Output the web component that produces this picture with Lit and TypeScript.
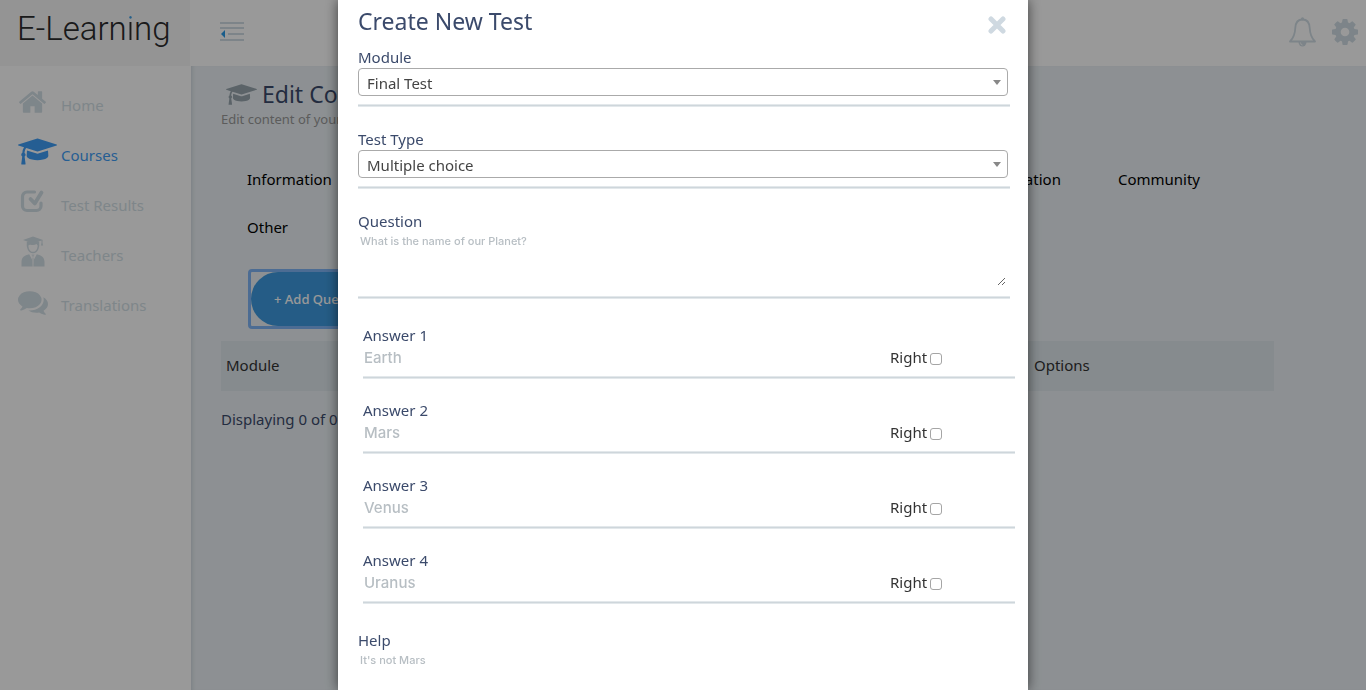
import { LitElement, html, svg, css } from "lit";
import { customElement, state } from "lit/decorators.js";

const CAP =
  "M1774 836l18 316q4 69-82 128t-235 93.5-323 34.5-323-34.5-235-93.5-82-128l18-316 574 181q22 7 48 7t48-7zm530-324q0 23-22 31l-1120 352q-4 1-10 1t-10-1l-652-206q-43 34-71 111.5t-34 178.5q63 36 63 109 0 69-58 107l58 433q2 14-8 25-9 11-24 11h-192q-15 0-24-11-10-11-8-25l58-433q-58-38-58-107 0-73 65-111 11-207 98-330l-333-104q-22-8-22-31t22-31l1120-352q4-1 10-1t10 1l1120 352q22 8 22 31z";
const HOME =
  "M1472 992v480q0 26-19 45t-45 19h-384v-384h-256v384h-384q-26 0-45-19t-19-45v-480q0-1 .5-3t.5-3l575-474 575 474q1 2 1 6zm223-69l-62 74q-8 9-21 11h-3q-13 0-21-7l-692-577-692 577q-12 8-24 7-13-2-21-11l-62-74q-8-10-7-23.5t11-21.5l719-599q32-26 76-26t76 26l244 204v-195q0-14 9-23t23-9h192q14 0 23 9t9 23v408l219 182q10 8 11 21.5t-7 23.5z";
const COG =
  "M1152 896q0-106-75-181t-181-75-181 75-75 181 75 181 181 75 181-75 75-181zm512-109v222q0 12-8 23t-20 13l-185 28q-19 54-39 91 35 50 107 138 10 12 10 25t-9 23q-27 37-99 108t-94 71q-12 0-26-9l-138-108q-44 23-91 38-16 136-29 186-7 28-36 28h-222q-14 0-24.5-8.5t-11.5-21.5l-28-184q-49-16-90-37l-141 107q-10 9-25 9-14 0-25-11-126-114-165-168-7-10-7-23 0-12 8-23 15-21 51-66.5t54-70.5q-27-50-41-99l-183-27q-13-2-21-12.5t-8-23.5v-222q0-12 8-23t19-13l186-28q14-46 39-92-40-57-107-138-10-12-10-24 0-10 9-23 26-36 98.5-107.5t94.5-71.5q13 0 26 10l138 107q44-23 91-38 16-136 29-186 7-28 36-28h222q14 0 24.5 8.5t11.5 21.5l28 184q49 16 90 37l142-107q9-9 24-9 13 0 25 10 129 119 165 170 7 8 7 22 0 12-8 23-15 21-51 66.5t-54 70.5q26 50 41 98l183 28q13 2 21 12.5t8 23.5z";
const CHAT =
  "M1408 768q0 139-94 257t-256.5 186.5-353.5 68.5q-86 0-176-16-124 88-278 128-36 9-86 16h-3q-11 0-20.5-8t-11.5-21q-1-3-1-6.5t.5-6.5 2-6l2.5-5 3.5-5.5 4-5 4.5-5 4-4.5q5-6 23-25t26-29.5 22.5-29 25-38.5 20.5-44q-124-72-195-177t-71-224q0-139 94-257t256.5-186.5 353.5-68.5 353.5 68.5 256.5 186.5 94 257zm384 256q0 120-71 224.5t-195 176.5q10 24 20.5 44t25 38.5 22.5 29 26 29.5 23 25q1 1 4 4.5t4.5 5 4 5 3.5 5.5l2.5 5 2 6 .5 6.5-1 6.5q-3 14-13 22t-22 7q-50-7-86-16-154-40-278-128-90 16-176 16-271 0-472-132 58 4 88 4 161 0 309-45t264-129q125-92 192-212t67-254q0-77-23-152 129 71 204 178t75 230z";

const navItems = [
  {
    label: "Home",
    icon: svg`<svg x="1" y="5" width="27" height="22" viewBox="89 253 1614 1283"><path d=${HOME} /></svg>`,
  },
  {
    label: "Courses",
    active: true,
    icon: svg`<svg x="0" y="2" width="39" height="27" viewBox="0 128 2304 1536"><path d=${CAP} /></svg>`,
  },
  {
    label: "Test Results",
    icon: svg`<g fill="none" stroke="currentColor" stroke-linecap="round" stroke-linejoin="round">
      <path d="M16.500 6H9a4.500 4.500 0 0 0-4.500 4.500V20A4.500 4.500 0 0 0 9 24.500h9.500a4.500 4.500 0 0 0 4.500-4.500v-3" stroke-width="3.200" />
      <path d="M12.500 13l4.300 4.500 6.700-11" stroke-width="3.800" />
    </g>`,
  },
  {
    label: "Teachers",
    icon: svg`<path d="M15 .5L25 4l-10 3.500L5 4z" />
      <path d="M24 4v4" stroke="currentColor" stroke-width="1" />
      <path d="M23.500 7.500h1l.7 2h-2.400z" />
      <path d="M9.500 6c-.6 4.500.8 10.500 5.500 10.500S21.100 10.500 20.500 6" fill="none" stroke="currentColor" stroke-width="1.400" />
      <path d="M9.200 5.500h11.600v4.700c-1.200-.5-1.600-1.200-2.200-2.200-1.500 1-3.400 1.200-5.200.9-1.800-.2-2.900.3-4.200 1.700z" />
      <path d="M3.500 30.500v-4.500c0-4.500 3-6.500 7.700-7.700l2.800 5.200v7zM26.500 30.500v-4.500c0-4.500-3-6.500-7.700-7.700L16 23.500v7z" />
      <path d="M13.500 18.500h3l-.8 2.200h-1.400zM14.400 21.500h1.200l.4 9h-2z" opacity=".6" />`,
  },
  {
    label: "Translations",
    icon: svg`<svg x="0" y="5" width="30" height="24" viewBox="0 256 1792 1408"><path d=${CHAT} /></svg>`,
  },
];

@customElement("app-root")
export class AppRoot extends LitElement {
  @state() private open = true;

  private answers = ["Earth", "Mars", "Venus", "Uranus"];

  static styles = css`
    :host {
      display: block;
      height: 100vh;
      overflow: hidden;
      font: 15px/20px "Noto Sans", sans-serif;
      color: #3b4a6b;
    }
    * { box-sizing: border-box; }
    a { color: inherit; text-decoration: none; }
    button { border: 0; padding: 0; background: none; font: inherit; color: inherit; cursor: pointer; }
    svg { display: block; fill: currentColor; }
    .page { display: grid; grid-template: 66px 1fr / 191px 1fr; height: 100%; }
    .logo {
      margin-right: 1px;
      padding-left: 17px;
      background: #f7f7f7;
      font: 300 33px/58px Roboto, sans-serif;
      color: #2c2c2e;
    }
    .logo-i {
      background: linear-gradient(#3d9fe6 12px, #2c2c2e 12px);
      background-clip: text;
      color: transparent;
    }
    .topbar { display: flex; align-items: center; padding: 0 8px 3px 29px; background: #fff; color: #d0dde4; }
    .tools { display: flex; align-items: center; gap: 16px; margin-left: auto; }
    .sidebar { padding-top: 15px; background: #fff; }
    .nav-link { display: flex; height: 50px; padding: 4px 0 0 18px; gap: 3px; color: #d3dfe6; }
    .nav-link.active { color: #3f9df5; }
    .nav-text { padding-top: 10px; }
    .content {
      padding: 14px 92px 0 30px;
      background: #ebf1f5;
      box-shadow: inset 4px 0 4px -3px #c9d2d8;
    }
    .heading { display: flex; align-items: center; gap: 5px; height: 28px; padding-left: 5px; }
    .cap { color: #98a5ae; }
    h1, h2 { margin: 0; font-weight: 400; font-size: 23px; line-height: 32px; }
    .sub { margin: 0; color: #999; font-size: 13px; line-height: 22px; }
    .tabs { display: grid; grid-template-columns: 1fr auto auto; gap: 28px 57px; margin: 39px 74px 0 26px; color: #000; }
    .add-wrap {
      width: fit-content;
      margin: 32px 0 0 27px;
      border: 3px solid #7fb4f5;
      border-radius: 4px;
    }
    .add {
      display: block;
      height: 54px;
      padding: 0 23px;
      border-radius: 27px;
      background: #3e9adf;
      color: #fff;
      font-size: 13px;
      font-weight: 500;
    }
    table { width: 100%; margin-top: 12px; border-collapse: collapse; color: #333; }
    th { height: 50px; padding: 0 5px 2px; background: #dfe8ed; font-weight: 400; text-align: left; }
    .options { width: 245px; }
    .count { margin: 18px 0 0; }

    .overlay { position: fixed; inset: 0; display: flex; justify-content: center; background: rgba(0, 0, 0, 0.4); }
    .modal {
      width: 100%;
      max-width: 690px;
      padding: 5px 18px 0 20px;
      background: #fff;
      box-shadow: 0 0 12px rgba(0, 0, 0, 0.6);
      overflow: hidden;
    }
    .modal-head { display: flex; justify-content: space-between; height: 43px; }
    .close { width: 18px; height: 40px; margin-right: 4px; color: #cfd9e1; }
    .field { margin-bottom: 23px; }
    label { display: block; line-height: 18px; padding-bottom: 2px; }
    .line { height: 3px; margin-top: 8px; border: solid #e3e8eb; border-width: 1px 0; background: #ced6db; }
    .select { display: grid; align-items: center; margin-right: 2px; }
    .select > * { grid-area: 1 / 1; }
    select {
      appearance: none;
      width: 100%;
      height: 28px;
      padding: 2px 8px 0;
      border: 1px solid #aaa;
      border-radius: 4px;
      background: #fff;
      font: inherit;
      color: #444;
    }
    .caret { justify-self: end; margin-right: 7px; color: #888; pointer-events: none; }
    input[type="text"], textarea {
      display: block;
      border: 0;
      outline: 0;
      background: transparent;
      font-family: Inter, sans-serif;
      font-weight: 500;
      color: #444;
    }
    textarea {
      width: calc(100% - 4px);
      height: 54px;
      margin-bottom: 10px;
      padding: 2px;
      font-size: 11px;
      line-height: 14px;
      resize: vertical;
    }
    input[type="text"] { width: 527px; min-width: 0; height: 22px; padding: 0 1px; font-size: 15px; }
    ::placeholder { color: #b7bec3; opacity: 1; }
    .answers { display: grid; gap: 22px; margin: 27px -5px 27px 5px; }
    .row { display: flex; height: 22px; }
    .right { display: flex; align-items: center; gap: 3px; padding: 0; line-height: 20px; color: #333; }
    input[type="checkbox"] {
      appearance: none;
      width: 12px;
      height: 12px;
      margin: 3px 0 0;
      border: 1px solid #a5a5a5;
      border-radius: 3px;
      background: #fff;
    }
    input[type="checkbox"]:checked { background: #3f9df5; }
  `;

  private renderSelect(id: string, label: string, value: string) {
    return html`<div class="field">
      <label for=${id}>${label}</label>
      <div class="select">
        <select id=${id}><option>${value}</option></select>
        <svg class="caret" width="8" height="5" viewBox="0 0 8 5"><path d="M0 0h8L4 5z" /></svg>
      </div>
      <div class="line"></div>
    </div>`;
  }

  private renderModal() {
    return html`<div class="overlay">
      <section class="modal" role="dialog" aria-labelledby="dialog-title">
        <header class="modal-head">
          <h2 id="dialog-title">Create New Test</h2>
          <button class="close" aria-label="Close" @click=${() => (this.open = false)}>
            <svg width="18" height="18" viewBox="0 0 18 18">
              <path d="M3 3l12 12M15 3L3 15" stroke="currentColor" stroke-width="5" stroke-linecap="round" />
            </svg>
          </button>
        </header>
        ${this.renderSelect("module", "Module", "Final Test")}
        ${this.renderSelect("type", "Test Type", "Multiple choice")}
        <div class="field">
          <label for="question">Question</label>
          <textarea id="question" placeholder="What is the name of our Planet?"></textarea>
          <div class="line"></div>
        </div>
        <div class="answers">
          ${this.answers.map(
            (answer, i) => html`<div>
              <label for="answer-${i}">Answer ${i + 1}</label>
              <div class="row">
                <input type="text" id="answer-${i}" placeholder=${answer} />
                <label class="right">Right<input type="checkbox" /></label>
              </div>
              <div class="line"></div>
            </div>`
          )}
        </div>
        <div class="field">
          <label for="help">Help</label>
          <textarea id="help" placeholder="It's not Mars"></textarea>
          <div class="line"></div>
        </div>
      </section>
    </div>`;
  }

  render() {
    return html`<div class="page">
        <div class="logo">E-Learn<span class="logo-i">i</span>ng</div>
        <header class="topbar">
          <button aria-label="Toggle menu">
            <svg width="24" height="20" viewBox="0 0 24 20">
              <path d="M0 1h24M0 6h24M8 12h16M0 18h24" stroke="currentColor" stroke-width="2" />
              <path d="M5 8v8l-4-4z" fill="#2b9be8" />
            </svg>
          </button>
          <div class="tools">
            <button aria-label="Notifications">
              <svg width="27" height="30" viewBox="0 0 27 30">
                <path
                  d="M13.500 2.500C8 2.500 6.500 6.500 6.300 11 6 17.500 4.500 21 1 24.500h25c-3.500-3.500-5-7-5.300-13.500-.2-4.500-1.700-8.500-7.200-8.500z"
                  fill="none" stroke="currentColor" stroke-width="1.800" stroke-linejoin="round"
                />
                <circle cx="13.500" cy="1.800" r="1.600" />
                <path d="M9.500 25a4 4.500 0 0 0 8 0z" />
                <path d="M11.500 25.500a2 2.500 0 0 0 2 2.500" fill="none" stroke="#fff" stroke-width=".8" />
              </svg>
            </button>
            <button aria-label="Settings">
              <svg width="26" height="26" viewBox="128 128 1536 1536"><path d=${COG} /></svg>
            </button>
          </div>
        </header>
        <nav class="sidebar">
          ${navItems.map(
            (item) => html`<a href="#" class="nav-link ${item.active ? "active" : ""}">
              <svg width="40" height="34" viewBox="0 -1 40 34">${item.icon}</svg>
              <span class="nav-text">${item.label}</span>
            </a>`
          )}
        </nav>
        <main class="content">
          <div class="heading">
            <svg class="cap" width="31" height="21" viewBox="0 128 2304 1536"><path d=${CAP} /></svg>
            <h1>Edit Course</h1>
          </div>
          <p class="sub">Edit content of your course</p>
          <nav class="tabs">
            <a href="#">Information</a>
            <a href="#">Certification</a>
            <a href="#">Community</a>
            <a href="#">Other</a>
          </nav>
          <div class="add-wrap">
            <button class="add" @click=${() => (this.open = true)}>+ Add Question</button>
          </div>
          <table>
            <thead>
              <tr><th>Module</th><th class="options">Options</th></tr>
            </thead>
          </table>
          <p class="count">Displaying 0 of 0</p>
        </main>
      </div>
      ${this.open ? this.renderModal() : ""}`;
  }
}
